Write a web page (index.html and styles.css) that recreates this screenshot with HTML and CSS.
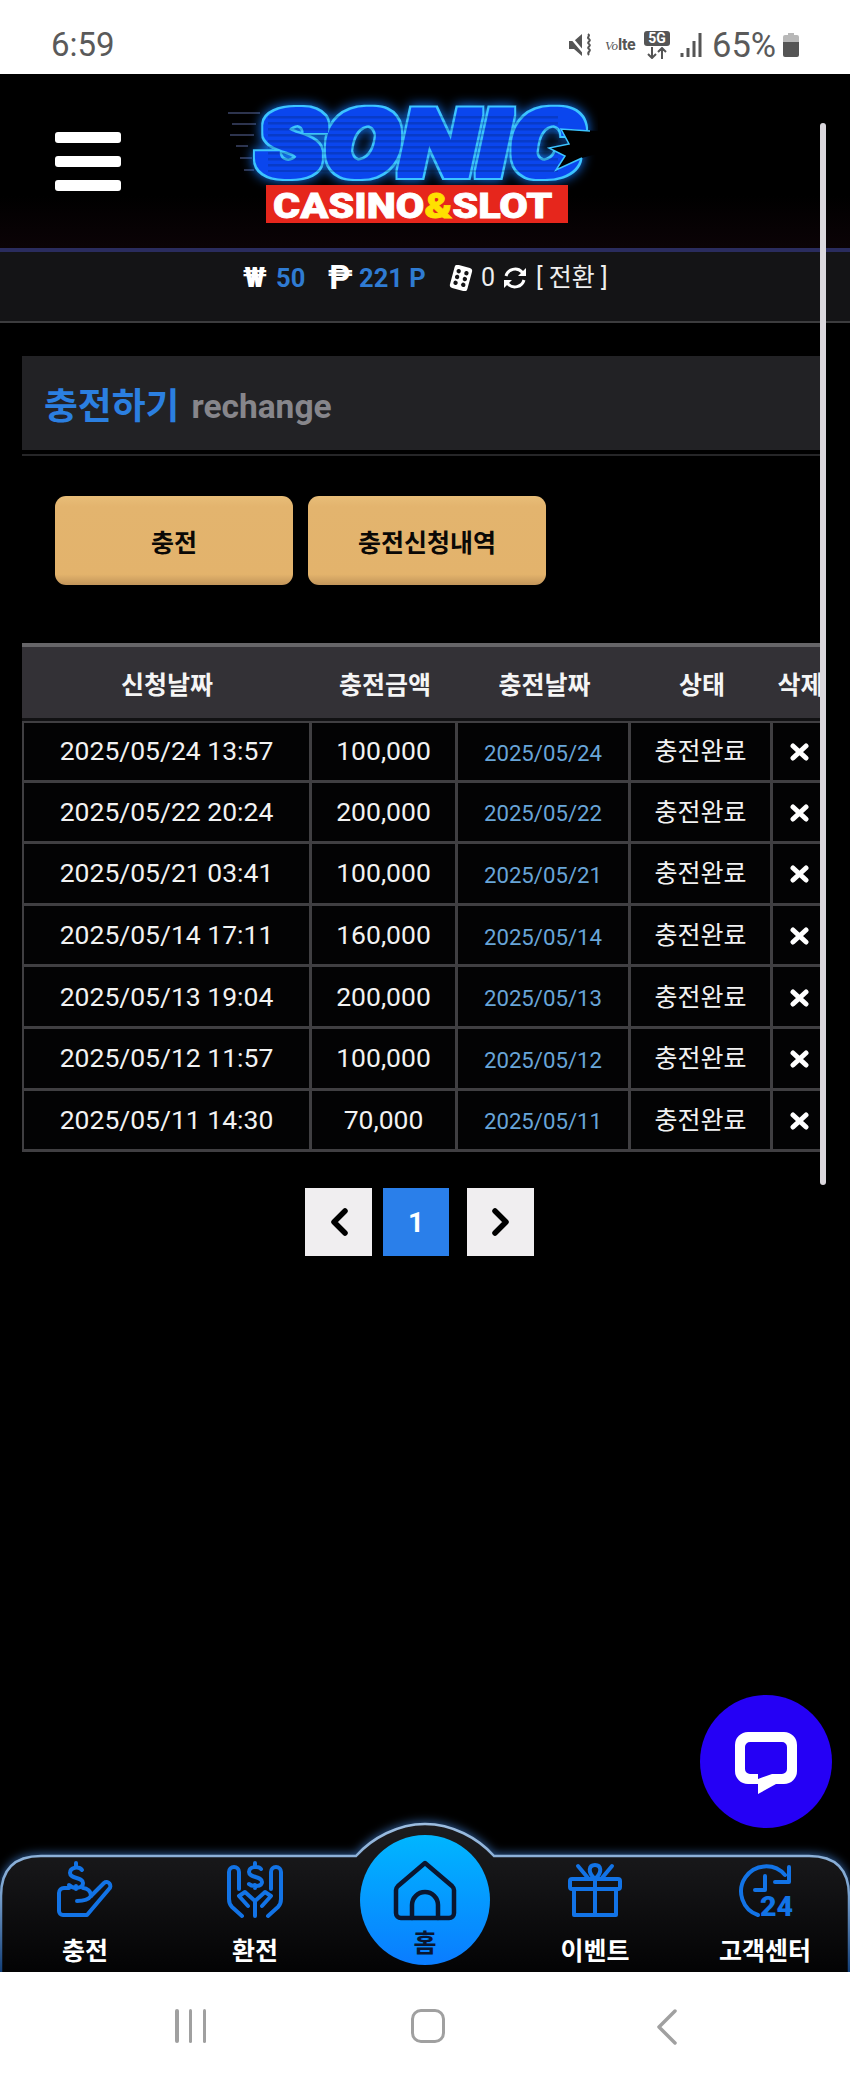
FILE: index.html
```html
<!DOCTYPE html>
<html lang="ko">
<head>
<meta charset="utf-8">
<title>충전하기</title>
<link rel="stylesheet" href="styles.css">
</head>
<body>
<div class="phone">
  <div class="status">
    <span class="time">6:59</span>
    <div class="status-right">
      <svg class="ic-mute" viewBox="0 0 24 24"><path class="st-fill" d="M0 8h5l8-7v22l-8-7H0z"/><path class="st-cut" d="M0 2l16 19"/><path class="st-line" d="M19 1c3 2-2 3 1 5s-3 3 0 5-3 3 0 5-3 3 0 6"/></svg>
      <span class="volte"><i>Vo</i><b>lte</b></span>
      <div class="fiveg"><span class="fiveg-box">5G</span><svg class="fiveg-arrows" viewBox="0 0 26 12"><path class="st-line" d="M8 0v11M4 7l4 4 4-4M18 12V1M14 5l4-4 4 4"/></svg></div>
      <svg class="ic-signal" viewBox="0 0 22 24"><path class="st-bar" d="M2 20v4M8 15v9M14 8v16M20 0v24"/></svg>
      <span class="pct">65%</span>
      <svg class="ic-batt" viewBox="0 0 16 24"><path class="batt-top" d="M5 0h6v2h3a2 2 0 0 1 2 2v5H0V4a2 2 0 0 1 2-2h3z"/><path class="st-fill" d="M0 9h16v13a2 2 0 0 1-2 2H2a2 2 0 0 1-2-2z"/></svg>
    </div>
  </div>

  <header class="header">
    <div class="burger"><span></span><span></span><span></span></div>
    <svg class="logo" viewBox="0 -14 370 144">
      <defs>
        <filter id="neon" x="-8%" y="-25%" width="116%" height="150%" color-interpolation-filters="sRGB">
          <feMorphology in="SourceAlpha" operator="dilate" radius="4.500" result="outer"/>
          <feMorphology in="SourceAlpha" operator="dilate" radius="3" result="inner"/>
          <feFlood flood-color="#3cc4ff" result="lineColor"/>
          <feComposite in="lineColor" in2="outer" operator="in" result="line"/>
          <feFlood flood-color="#0a46ee" result="bodyColor"/>
          <feComposite in="bodyColor" in2="inner" operator="in" result="body"/>
          <feGaussianBlur in="outer" stdDeviation="6" result="blur"/>
          <feFlood flood-color="#1478ff" result="glowColor"/>
          <feComposite in="glowColor" in2="blur" operator="in" result="glow"/>
          <feMerge><feMergeNode in="glow"/><feMergeNode in="line"/><feMergeNode in="body"/></feMerge>
        </filter>
        <pattern id="scan" width="6" height="6" patternUnits="userSpaceOnUse"><rect class="scan-line" width="6" height="2.500"/></pattern>
      </defs>
      <path class="speed" d="M0 15h32M4 26h24M2 37h24M8 48h12M12 60h12M16 72h10"/>
      <g filter="url(#neon)"><text class="sonic" transform="translate(28 77) scale(1.255 1)">SONIC</text></g>
      <rect class="scan" x="40" y="16" width="290" height="58" fill="url(#scan)"/>
      <path class="notch" d="M372 33L333 31l8 15-20 4 16 8-9 14 26-12 28-8z"/>
      <path class="notch-line" d="M362 33L333 31l8 15-20 4 16 8-9 14 26-12"/>
      <rect class="redbox" x="38" y="87" width="302" height="38"/>
      <text class="casino" transform="translate(45 120) scale(1.150 1)">CASINO<tspan class="amp">&amp;</tspan>SLOT</text>
    </svg>
  </header>

  <div class="wallet">
    <span class="sym sym-won">₩</span>
    <span class="amt amt-won">50</span>
    <span class="sym sym-p">₱</span>
    <span class="amt amt-p">221 P</span>
    <svg class="ic-dice" viewBox="0 0 24 26"><g transform="rotate(15 12 13)"><rect class="dice-body" x="3" y="1" width="18" height="24" rx="3"/><circle class="dice-dot" cx="8" cy="7" r="2.200"/><circle class="dice-dot" cx="16" cy="7" r="2.200"/><circle class="dice-dot" cx="8" cy="13" r="2.200"/><circle class="dice-dot" cx="16" cy="13" r="2.200"/><circle class="dice-dot" cx="8" cy="19" r="2.200"/><circle class="dice-dot" cx="16" cy="19" r="2.200"/></g></svg>
    <span class="coin">0</span>
    <svg class="ic-refresh" viewBox="0 0 24 24"><path class="refresh-line" d="M3 10a9.500 9.500 0 0 1 16-4l2 2M21 14a9.500 9.500 0 0 1-16 4l-2-2"/><path class="refresh-head" d="M23 2v8h-8zM1 22v-8h8z"/></svg>
    <span class="swap">[ 전환 ]</span>
  </div>

  <main class="content">
    <div class="title-bar"><h1 class="title">충전하기</h1><span class="title-en">rechange</span></div>
    <div class="title-rule"></div>

    <div class="tabs">
      <button class="tab">충전</button>
      <button class="tab">충전신청내역</button>
    </div>

    <div class="table-wrap">
      <table class="history">
        <colgroup><col class="c1"><col class="c2"><col class="c3"><col class="c4"><col class="c5"></colgroup>
        <thead><tr><th>신청날짜</th><th>충전금액</th><th>충전날짜</th><th>상태</th><th>삭제</th></tr></thead>
        <tbody>
          <tr><td>2025/05/24 13:57</td><td>100,000</td><td class="done">2025/05/24</td><td>충전완료</td><td><svg class="ic-x" viewBox="0 0 19 18"><path d="M3 3l13 12M16 3L3 15"/></svg></td></tr>
          <tr><td>2025/05/22 20:24</td><td>200,000</td><td class="done">2025/05/22</td><td>충전완료</td><td><svg class="ic-x" viewBox="0 0 19 18"><path d="M3 3l13 12M16 3L3 15"/></svg></td></tr>
          <tr><td>2025/05/21 03:41</td><td>100,000</td><td class="done">2025/05/21</td><td>충전완료</td><td><svg class="ic-x" viewBox="0 0 19 18"><path d="M3 3l13 12M16 3L3 15"/></svg></td></tr>
          <tr><td>2025/05/14 17:11</td><td>160,000</td><td class="done">2025/05/14</td><td>충전완료</td><td><svg class="ic-x" viewBox="0 0 19 18"><path d="M3 3l13 12M16 3L3 15"/></svg></td></tr>
          <tr><td>2025/05/13 19:04</td><td>200,000</td><td class="done">2025/05/13</td><td>충전완료</td><td><svg class="ic-x" viewBox="0 0 19 18"><path d="M3 3l13 12M16 3L3 15"/></svg></td></tr>
          <tr><td>2025/05/12 11:57</td><td>100,000</td><td class="done">2025/05/12</td><td>충전완료</td><td><svg class="ic-x" viewBox="0 0 19 18"><path d="M3 3l13 12M16 3L3 15"/></svg></td></tr>
          <tr><td>2025/05/11 14:30</td><td>70,000</td><td class="done">2025/05/11</td><td>충전완료</td><td><svg class="ic-x" viewBox="0 0 19 18"><path d="M3 3l13 12M16 3L3 15"/></svg></td></tr>
        </tbody>
      </table>
    </div>

    <div class="pager">
      <a class="page"><svg class="ic-chev" viewBox="0 0 20 28"><path d="M16 3L5 14l11 11"/></svg></a>
      <a class="page page-on">1</a>
      <a class="page page-next"><svg class="ic-chev" viewBox="0 0 20 28"><path d="M4 3l11 11L4 25"/></svg></a>
    </div>
  </main>

  <nav class="tabbar">
    <svg class="tabbar-bg" viewBox="0 0 850 152">
      <defs>
        <linearGradient id="barFill" x1="0" y1="0" x2="0" y2="1">
          <stop offset="0" stop-color="#1c1c1f"/><stop offset=".3" stop-color="#161618"/><stop offset="1" stop-color="#030304"/>
        </linearGradient>
        <linearGradient id="barLine" x1="0" y1="0" x2="0" y2="1">
          <stop offset="0" stop-color="#9cbde0"/><stop offset=".45" stop-color="#7ca4d0"/><stop offset="1" stop-color="#123e78"/>
        </linearGradient>
      </defs>
      <path class="bar-shape" d="M1 152V76Q1 36 41 36H356C372 18 398 4 425 4C452 4 478 18 494 36H809Q849 36 849 76V152"/>
    </svg>

    <a class="tabitem">
      <svg class="tabicon" viewBox="0 0 54 54"><path d="M24 7C21 3 12 4 12 10c0 6 13 4 13 10 0 6-10 6-14 2M18 0v3M18 23v3"/><path d="M11 25H6a5 5 0 0 0-5 5v18a4 4 0 0 0 4 4h24l22-26a3.600 3.600 0 0 0-5-6L33 33c-2 3-8 5-14 5"/><path d="M25 25c4 0 8 3 8 8"/></svg>
      <span class="tablabel">충전</span>
    </a>
    <a class="tabitem">
      <svg class="tabicon" viewBox="0 0 54 54"><path d="M33 6c-2-3-12-3-12 3 0 6 13 4 13 10 0 5-10 5-13 2M27 0v3M27 22v3"/><path d="M14 53L4 44c-2-2-3-5-3-8V9a5 5 0 0 1 10 0v17M40 53l10-9c2-2 3-5 3-8V9a5 5 0 0 0-10 0v17"/><path d="M27 53V38L17 29 11 33l9 10M27 38l10-9 6 4-9 10"/></svg>
      <span class="tablabel">환전</span>
    </a>
    <a class="tabitem tabitem-home">
      <div class="homebtn">
        <svg class="homeicon" viewBox="0 0 62 60"><path d="M31 3L4 26c-1 1-2 2-2 4v23a5 5 0 0 0 5 5h48a5 5 0 0 0 5-5V30c0-2-1-3-2-4z"/><path d="M18 58V45a13 13 0 0 1 26 0v13"/></svg>
        <span class="homelabel">홈</span>
      </div>
    </a>
    <a class="tabitem">
      <svg class="tabicon" viewBox="0 0 54 54"><rect x="2" y="16" width="50" height="10" rx="2"/><path d="M6 26v26h42V26M27 16v36M27 16C19 9 21 2 27 2s8 7 0 14zM10 3l10 12M44 3L34 15"/></svg>
      <span class="tablabel">이벤트</span>
    </a>
    <a class="tabitem">
      <svg class="tabicon" viewBox="0 0 54 54"><path d="M20 52A25 25 0 1 1 47 12"/><path d="M51 4v15H37M27 13v14H17"/><text class="icon-num" transform="translate(22 53) scale(1.060 1)">24</text></svg>
      <span class="tablabel">고객센터</span>
    </a>
  </nav>

  <div class="sysbar">
    <div class="sys-recent"><span></span><span></span><span></span></div>
    <div class="sys-home"></div>
    <svg class="sys-back" viewBox="0 0 20 36"><path d="M18 2L2 18l16 16"/></svg>
  </div>

  <div class="scrollthumb"></div>

  <a class="chat">
    <svg class="chat-icon" viewBox="0 0 62 62"><path fill-rule="evenodd" d="M13 0h36a13 13 0 0 1 13 13v26a13 13 0 0 1-13 13H41L23 62V52H13A13 13 0 0 1 0 39V13A13 13 0 0 1 13 0zM15 10a5 5 0 0 0-5 5v22a5 5 0 0 0 5 5h8v5l14-5h10a5 5 0 0 0 5-5V15a5 5 0 0 0-5-5z"/></svg>
  </a>
</div>
</body>
</html>
```
FILE: styles.css
```css
* { box-sizing: border-box; }
html, body { margin: 0; padding: 0; background: #000; }
body { font-family: Roboto, "Noto Sans CJK KR", sans-serif; }
.phone { position: relative; width: 850px; height: 2078px; display: flex; flex-direction: column; overflow: hidden; background: #000; }

/* status bar */
.status { height: 74px; flex: none; background: #fff; display: flex; justify-content: space-between; align-items: center; padding: 16px 51px 0; color: #5a5a5a; }
.time { font-size: 33px; line-height: 58px; }
.status-right { display: flex; align-items: center; }
.st-fill { fill: #555; }
.st-cut { stroke: #fff; stroke-width: 2.500; fill: none; }
.st-line { stroke: #555; stroke-width: 2; fill: none; }
.st-bar { stroke: #555; stroke-width: 3; fill: none; }
.batt-top { fill: #b8b8b8; }
.ic-mute { width: 24px; height: 24px; }
.volte { margin-left: 12px; width: 31px; font-size: 15px; line-height: 16px; display: flex; align-items: baseline; color: #555; white-space: nowrap; }
.volte i { font-family: "Liberation Serif", serif; font-size: 13px; }
.volte b { font-size: 16px; letter-spacing: -.3px; }
.fiveg { margin-left: 8px; width: 26px; display: flex; flex-direction: column; align-items: center; gap: 1px; }
.fiveg-box { width: 26px; height: 15px; background: #555; color: #fff; border-radius: 3px; font-size: 14px; line-height: 15px; font-weight: 700; text-align: center; }
.fiveg-arrows { width: 26px; height: 12px; }
.ic-signal { margin-left: 10px; width: 22px; height: 24px; }
.pct { margin-left: 10px; font-size: 34.500px; line-height: 40px; width: 64px; white-space: nowrap; }
.ic-batt { margin-left: 7px; width: 16px; height: 24px; }

/* header */
.header { height: 178px; flex: none; display: flex; align-items: flex-start; padding-left: 55px; background: linear-gradient(#000 70%, #0b0306); border-bottom: 4px solid #2a2c5e; }
.burger { width: 66px; margin-top: 58px; display: flex; flex-direction: column; gap: 13px; }
.burger span { display: block; height: 11px; background: #fff; border-radius: 3px; }
.logo { width: 370px; height: 144px; margin-top: 10px; margin-left: 107px; }
.speed { stroke: #3c4668; stroke-width: 1.500; fill: none; }
.sonic { font-family: Roboto, sans-serif; font-weight: 900; font-style: italic; font-size: 90px; fill: #000; }
.scan-line { fill: #000; opacity: .16; }
.notch { fill: #000; }
.notch-line { fill: none; stroke: #3cc4ff; stroke-width: 1.500; }
.redbox { fill: #e6261c; }
.casino { font-family: Roboto, sans-serif; font-weight: 900; font-size: 36px; fill: #fff; stroke: #fff; stroke-width: .8; }
.amp { fill: #ffe000; stroke: #ffe000; }

/* wallet row */
.wallet { height: 71px; flex: none; display: flex; align-items: flex-start; padding: 11px 0 0 243px; background: #141416; border-bottom: 2px solid #3c3c3e; color: #eee; font-size: 25px; line-height: 30px; }
.sym { color: #fff; font-weight: 900; font-size: 28px; }
.sym-won { width: 24px; }
.sym-p { width: 20px; margin-left: 24px; font-weight: 700; font-size: 33px; }
.amt { color: #2f7bd2; font-weight: 700; font-size: 25.500px; }
.amt-won { margin-left: 9px; width: 28px; }
.amt-p { margin-left: 11px; width: 68px; white-space: nowrap; }
.ic-dice { width: 24px; height: 26px; margin: 2px 0 0 22px; }
.dice-body { fill: #fff; }
.dice-dot { fill: #141416; }
.coin { margin-left: 8px; width: 14px; }
.ic-refresh { width: 24px; height: 24px; margin: 3px 0 0 8px; }
.refresh-line { stroke: #fff; stroke-width: 3; fill: none; }
.refresh-head { fill: #fff; }
.swap { margin-left: 9px; white-space: nowrap; }

/* content */
.content { flex: 1; min-height: 0; padding: 33px 24px 0 22px; }
.title-bar { height: 94px; display: flex; align-items: center; padding: 8px 0 0 22px; background: #222225; gap: 12px; }
.title { margin: 0; font-size: 36.800px; font-weight: 700; color: #2b7fe0; line-height: 44px; }
.title-en { font-size: 33.500px; font-weight: 700; color: #87868b; line-height: 44px; }
.title-rule { height: 2px; margin-top: 4px; background: #262628; }
.tabs { display: flex; gap: 15px; margin: 40px 0 0 33px; }
.tab { width: 238px; height: 89px; border: 0; border-radius: 11px; padding: 0; background: linear-gradient(#e8bd78, #e3b46e 12%, #e3b36c 88%, #c2955a); color: #0a0806; font-family: inherit; font-size: 25px; font-weight: 700; }

/* table */
.table-wrap { margin-top: 58px; overflow: hidden; }
.history { width: 806px; table-layout: fixed; border-collapse: separate; border-spacing: 0; }
.c1 { width: 290px; }
.c2 { width: 146px; }
.c3 { width: 173px; }
.c4 { width: 142px; }
.c5 { width: 55px; }
.history th { height: 78px; border-top: 4px solid #666568; border-bottom: 3px solid #111113; background: #333136; color: #f5f5f5; font-size: 25px; font-weight: 700; padding: 0; }
.history td { height: 61.600px; padding: 0; text-align: center; background: #030304; color: #f2f2f2; font-size: 26.500px; line-height: 30px; border-right: 3px solid #403f42; border-bottom: 3px solid #403f42; }
.history td:first-child { border-left: 2px solid #403f42; }
.history tbody tr:first-child td { border-top: 2px solid #403f42; }
.history td:nth-child(4) { font-size: 25px; padding-top: 2px; }
.history td.done { color: #68a5d8; font-size: 22.200px; padding-top: 3px; }
.ic-x { width: 19px; height: 18px; display: block; margin: 2px auto 0; }
.ic-x path { stroke: #fff; stroke-width: 5; stroke-linecap: round; fill: none; }

/* pager */
.pager { display: flex; margin: 36px 0 0 283px; }
.page { width: 67px; height: 68px; display: flex; align-items: center; justify-content: center; background: #f0eef0; }
.page-on { width: 66px; margin-left: 11px; background: #2a7fea; color: #fff; font-size: 28px; font-weight: 700; }
.page-next { margin-left: 18px; }
.ic-chev { width: 20px; height: 28px; }
.ic-chev path { stroke: #000; stroke-width: 5.500; stroke-linecap: round; stroke-linejoin: round; fill: none; }

/* tab bar */
.tabbar { position: relative; height: 116px; flex: none; display: grid; grid-template-columns: repeat(5, 170px); }
.tabbar-bg { position: absolute; left: 0; top: -36px; width: 850px; height: 152px; overflow: visible; }
.bar-shape { fill: url(#barFill); stroke: url(#barLine); stroke-width: 2.500; filter: drop-shadow(0 -1px 5px rgba(70, 140, 230, .65)); }
.tabitem { position: relative; display: flex; flex-direction: column; align-items: center; padding-top: 7px; }
.tabicon { width: 54px; height: 54px; overflow: visible; }
.tabicon path, .tabicon rect { fill: none; stroke: #1273e6; stroke-width: 4; stroke-linecap: round; stroke-linejoin: round; }
.icon-num { font-family: Roboto, sans-serif; font-weight: 900; font-size: 27px; fill: #1273e6; }
.tablabel { margin-top: 20px; color: #fff; font-size: 25px; line-height: 30px; font-weight: 700; white-space: nowrap; }
.tabitem-home { padding-top: 0; }
.homebtn { width: 130px; height: 130px; margin-top: -21px; border-radius: 50%; display: flex; flex-direction: column; align-items: center; padding-top: 25px; background: linear-gradient(#00b6ff, #0a7cff); }
.homeicon { width: 62px; height: 60px; overflow: visible; }
.homeicon path { fill: none; stroke: #0a1630; stroke-width: 4.500; stroke-linecap: round; stroke-linejoin: round; }
.homelabel { margin-top: 9px; color: #0a1630; font-size: 25px; line-height: 30px; font-weight: 700; }

/* system nav */
.sysbar { position: relative; height: 106px; flex: none; background: #fff; display: flex; align-items: flex-start; padding: 37px 0 0 175px; }
.sys-recent { width: 31px; height: 34px; display: flex; justify-content: space-between; }
.sys-recent span { width: 3.500px; background: #a0a0a0; border-radius: 2px; }
.sys-home { width: 34px; height: 34px; margin-left: 205px; border: 3.500px solid #a0a0a0; border-radius: 10px; }
.sys-back { width: 20px; height: 36px; margin-left: 212px; }
.sys-back path { stroke: #a0a0a0; stroke-width: 3.500; fill: none; stroke-linecap: round; stroke-linejoin: round; }

/* overlays */
.scrollthumb { position: absolute; left: 820px; top: 123px; width: 6px; height: 1062px; border-radius: 3px; background: #dbd8dd; }
.chat { position: absolute; left: 700px; top: 1695px; width: 132px; height: 133px; border-radius: 50%; background: #2500f5; display: flex; align-items: center; justify-content: center; padding-top: 3px; }
.chat-icon { width: 62px; height: 62px; fill: #fff; }
```
